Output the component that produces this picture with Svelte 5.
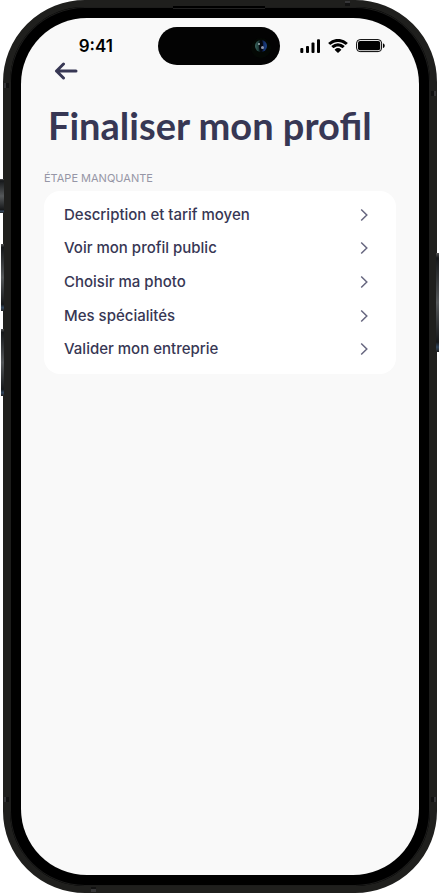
<script>
    import { createEventDispatcher } from 'svelte';
    const dispatch = createEventDispatcher();

    const steps = [
        { id: 'description', label: 'Description et tarif moyen' },
        { id: 'profil', label: 'Voir mon profil public' },
        { id: 'photo', label: 'Choisir ma photo' },
        { id: 'specialites', label: 'Mes spécialités' },
        { id: 'entreprise', label: 'Valider mon entreprie' }
    ];

    function go_back() {
        dispatch('back');
    }
</script>

<div class="phone">
    <span class="key silent"></span>
    <span class="key vol-up"></span>
    <span class="key vol-down"></span>
    <span class="key power"></span>
    <span class="band left top"></span>
    <span class="band left bottom"></span>
    <span class="band right top"></span>
    <span class="band right bottom"></span>
    <span class="band upper"></span>
    <span class="band lower"></span>
    <span class="speaker"></span>

    <div class="bezel">
        <div class="screen">
            <header class="status">
                <span class="time">9:41</span>
                <div class="island">
                    <svg width="22" height="22" viewBox="0 0 22 22" aria-hidden="true">
                        <defs>
                            <linearGradient id="lens">
                                <stop offset="0" stop-color="#3b6660" />
                                <stop offset="0.35" stop-color="#173230" />
                                <stop offset="0.5" stop-color="#02040a" />
                                <stop offset="0.75" stop-color="#142f6c" />
                                <stop offset="1" stop-color="#1d4584" />
                            </linearGradient>
                        </defs>
                        <circle cx="11" cy="11" r="10" fill="#040804" />
                        <circle cx="11" cy="9" r="6" fill="url(#lens)" />
                        <ellipse cx="11" cy="9" rx="2" ry="6" fill="#05070c" />
                        <circle cx="9" cy="7" r="1" fill="#a3b5b4" />
                        <circle cx="12.5" cy="10.5" r="1.5" fill="#8f98ab" />
                    </svg>
                </div>
                <div class="indicators">
                    <svg width="20" height="14" viewBox="0 0 20 14" aria-hidden="true">
                        <rect x="0.3" y="9" width="3" height="5" rx="1" />
                        <rect x="6" y="7" width="3" height="7" rx="1" />
                        <rect x="11.5" y="3.5" width="3" height="10.5" rx="1" />
                        <rect x="17" y="0.3" width="3" height="13.7" rx="1" />
                    </svg>
                    <svg width="20" height="14" viewBox="0 0 20 14" aria-hidden="true">
                        <path d="M10 2.9c2.8 0 5.4 1.1 7.4 2.9.2.2.4.2.6 0l1.6-1.5c.2-.2.2-.4 0-.6a14 14 0 0 0-19.2 0c-.2.2-.2.4 0 .6L2 5.8c.2.2.4.2.6 0 2-1.8 4.6-2.9 7.4-2.9Z" />
                        <path d="M10 7.4c1.6 0 3 .6 4.2 1.6.2.2.4.2.6 0l1.6-1.6c.2-.2.2-.4 0-.6a9.4 9.4 0 0 0-12.8 0c-.2.2-.2.4 0 .6l1.6 1.6c.2.2.4.2.6 0 1.2-1 2.6-1.6 4.2-1.6Z" />
                        <path d="M13.2 10.4c.2.2.2.4 0 .6l-2.9 2.8c-.2.2-.4.2-.6 0L6.8 11c-.2-.2-.2-.4 0-.6a5 5 0 0 1 6.4 0Z" />
                    </svg>
                    <svg width="29" height="14" viewBox="0 0 29 14" aria-hidden="true">
                        <rect x="0.6" y="0.6" width="25" height="12" rx="3.5" fill="none" stroke="#000" stroke-width="1" />
                        <rect x="2" y="2" width="22.2" height="9.2" rx="2" />
                        <path d="M27 4.3v4.8c1-.4 1.7-1.3 1.7-2.4S28 4.7 27 4.3Z" />
                    </svg>
                </div>
            </header>

            <button class="back" type="button" aria-label="Retour" on:click={go_back}>
                <svg width="24" height="18" viewBox="0 0 24 18" aria-hidden="true">
                    <path d="M22 9H2.5M9.500 2 2.500 9l7 7" />
                </svg>
            </button>

            <main>
                <h1>Finaliser mon profil</h1>
                <h2>ÉTAPE MANQUANTE</h2>
                <nav class="card">
                    {#each steps as step}
                        <a href="#{step.id}">
                            <span>{step.label}</span>
                            <svg width="8" height="14" viewBox="0 0 8 14" aria-hidden="true">
                                <path d="M1.2 1.5 6.8 7l-5.6 5.5" />
                            </svg>
                        </a>
                    {/each}
                </nav>
            </main>
        </div>
    </div>
</div>

<style>
    :global(body) {
        background: #fff;
    }

    .phone {
        position: relative;
        box-sizing: border-box;
        display: flex;
        min-height: 100vh;
        padding: 0 2px 0 3px;
        font-family: Inter, "Liberation Sans", sans-serif;
        color: #373754;
    }

    .bezel {
        box-sizing: border-box;
        flex: 1;
        display: flex;
        padding: 10px;
        background: #000;
        border: 7px solid #1f1f1d;
        border-radius: 82px;
        box-shadow: inset 0 0 0 1px #1c1c1b;
    }

    .screen {
        flex: 1;
        min-width: 0;
        margin: 1px;
        background: #f9f9f9;
        border-radius: 66px;
    }

    /* hardware details around the frame */
    .key {
        position: absolute;
        left: 1px;
        width: 3px;
        height: 67px;
        background: linear-gradient(#555 0, #16181a 5%, #55585a 50%, #16181a 90%, #33475e 95%, #222 100%);
    }
    .silent {
        top: 179px;
        left: 0;
        width: 4px;
        height: 34px;
    }
    .vol-up {
        top: 244px;
    }
    .vol-down {
        top: 329px;
    }
    .power {
        top: 253px;
        left: auto;
        right: 0;
        height: 99px;
    }

    .band {
        position: absolute;
        width: 5px;
        height: 5px;
        background: linear-gradient(90deg, #363638 50%, #111 50%);
    }
    .band.left {
        left: 4px;
    }
    .band.right {
        right: 3px;
        background: linear-gradient(90deg, #111 50%, #363638 50%);
    }
    .band.top {
        top: 83px;
    }
    .band.right.top {
        top: 91px;
    }
    .band.bottom {
        bottom: 91px;
    }
    .band.upper {
        top: 1px;
        right: 89px;
        background: linear-gradient(#363638 50%, #111 50%);
    }
    .band.lower {
        bottom: 1px;
        left: 91px;
        background: linear-gradient(#111 50%, #363638 50%);
    }

    .speaker {
        position: absolute;
        top: 6px;
        left: 50%;
        width: 92px;
        height: 3px;
        margin-left: -47px;
        box-sizing: border-box;
        background: #000;
        border-bottom: 1px solid #222;
    }

    .status {
        display: grid;
        grid-template-columns: 1fr 122px 1fr;
        align-items: center;
        padding: 9px 2px 0 0;
    }

    .time {
        padding-right: 45px;
        text-align: right;
        font-size: 17px;
        font-weight: 600;
        line-height: 20px;
        color: #000;
    }

    .island {
        display: flex;
        align-items: center;
        justify-content: flex-end;
        box-sizing: border-box;
        height: 38px;
        padding: 4px 8px 0 0;
        background: #030303;
        border-radius: 19px;
    }

    .indicators {
        display: flex;
        gap: 8px;
        padding-left: 20px;
    }

    .back {
        display: block;
        margin: -3px 0 0 33px;
        padding: 0;
        border: 0;
        background: none;
        cursor: pointer;
    }
    .back svg {
        display: block;
        fill: none;
        stroke: #373754;
        stroke-width: 3;
        stroke-linecap: round;
        stroke-linejoin: round;
    }

    main {
        padding: 20px 23px 0;
    }

    h1 {
        margin: 0;
        padding-left: 4px;
        font-family: Lato, "Liberation Sans", sans-serif;
        font-size: 38px;
        font-weight: 700;
        line-height: 50px;
        white-space: nowrap;
    }

    h2 {
        margin: 20px 0 5px;
        font-size: 11px;
        font-weight: 400;
        line-height: 16px;
        color: #9696a6;
    }

    .card {
        box-sizing: border-box;
        display: grid;
        grid-auto-rows: 1fr;
        min-height: 183px;
        padding: 7px 28px 8px 20px;
        background: #fff;
        border-radius: 16px;
    }

    .card a {
        display: flex;
        align-items: center;
        justify-content: space-between;
        color: #373754;
        font-size: 15px;
        font-weight: 500;
        line-height: 20px;
        text-decoration: none;
    }
    .card svg {
        fill: none;
        stroke: #66667f;
        stroke-width: 1.5;
    }
</style>
